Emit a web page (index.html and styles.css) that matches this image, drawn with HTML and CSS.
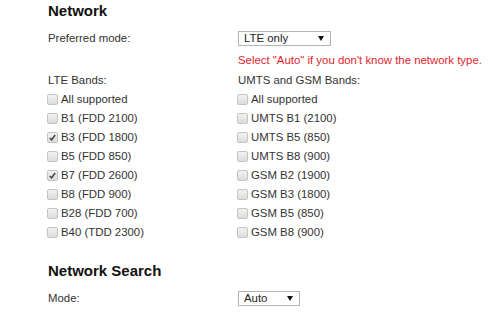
FILE: index.html
```html
<!DOCTYPE html>
<html>
<head>
<meta charset="utf-8">
<link rel="stylesheet" href="styles.css">
</head>
<body>
<div class="page">
  <h2 class="title">Network</h2>
  <div class="row first">
    <div class="label">Preferred mode:</div>
    <div><span class="select wide"><span>LTE only</span><svg class="arrow" width="6" height="5" viewBox="0 0 6 5"><path d="M0 0H6L3 5Z" fill="#111"/></svg></span></div>
  </div>
  <div class="row">
    <div></div>
    <div class="note">Select "Auto" if you don't know the network type.</div>
  </div>
  <div class="bands">
    <div class="col">
      <div class="line">LTE Bands:</div>
      <label class="line"><span class="cb"></span>All supported</label>
      <label class="line"><span class="cb"></span>B1 (FDD 2100)</label>
      <label class="line"><span class="cb"><svg width="9" height="9" viewBox="0 0 9 9"><path d="M1.8 5L3.6 6.8L7.2 2" fill="none" stroke="#444" stroke-width="1.5"/></svg></span>B3 (FDD 1800)</label>
      <label class="line"><span class="cb"></span>B5 (FDD 850)</label>
      <label class="line"><span class="cb"><svg width="9" height="9" viewBox="0 0 9 9"><path d="M1.8 5L3.6 6.8L7.2 2" fill="none" stroke="#444" stroke-width="1.5"/></svg></span>B7 (FDD 2600)</label>
      <label class="line"><span class="cb"></span>B8 (FDD 900)</label>
      <label class="line"><span class="cb"></span>B28 (FDD 700)</label>
      <label class="line"><span class="cb"></span>B40 (TDD 2300)</label>
    </div>
    <div class="col">
      <div class="line">UMTS and GSM Bands:</div>
      <label class="line"><span class="cb"></span>All supported</label>
      <label class="line"><span class="cb"></span>UMTS B1 (2100)</label>
      <label class="line"><span class="cb"></span>UMTS B5 (850)</label>
      <label class="line"><span class="cb"></span>UMTS B8 (900)</label>
      <label class="line"><span class="cb"></span>GSM B2 (1900)</label>
      <label class="line"><span class="cb"></span>GSM B3 (1800)</label>
      <label class="line"><span class="cb"></span>GSM B5 (850)</label>
      <label class="line"><span class="cb"></span>GSM B8 (900)</label>
    </div>
  </div>
  <h2 class="title second">Network Search</h2>
  <div class="row first">
    <div class="label">Mode:</div>
    <div><span class="select narrow"><span>Auto</span><svg class="arrow" width="6" height="5" viewBox="0 0 6 5"><path d="M0 0H6L3 5Z" fill="#111"/></svg></span></div>
  </div>
</div>
</body>
</html>
```
FILE: styles.css
```css
html, body {
  margin: 0;
  padding: 0;
  background: #fff;
}
body {
  font-family: "Liberation Sans", Arial, sans-serif;
  font-size: 11.4px;
  color: #333;
}
.page {
  padding: 2px 0 0 48px;
}
.title {
  margin: 0;
  font-size: 15px;
  line-height: 18px;
  font-weight: bold;
  color: #111;
}
.title.second {
  margin-top: 20px;
}
.row {
  display: grid;
  grid-template-columns: 190px auto;
  line-height: 16px;
}
.row.first {
  margin-top: 10px;
}
.label {
  line-height: 16px;
}
.note {
  margin-top: 6px;
  color: #e3242b;
  line-height: 16px;
}
.select {
  display: flex;
  align-items: center;
  justify-content: space-between;
  box-sizing: border-box;
  height: 15px;
  margin-top: 1px;
  padding: 0 6px 0 5px;
  border: 1px solid #b4b4b4;
  background: #fff;
  color: #222;
  line-height: 13px;
}
.select.wide { width: 93px; }
.select.narrow { width: 62px; }
.arrow { display: block; }
.bands {
  display: grid;
  grid-template-columns: 190px auto;
  margin-top: 2.5px;
}
.line {
  display: flex;
  align-items: center;
  height: 19px;
  line-height: 19px;
}
.cb {
  display: flex;
  align-items: center;
  justify-content: center;
  box-sizing: border-box;
  width: 11px;
  height: 11px;
  margin: 0 3px 0 -1px;
  border: 1px solid #c4c4c4;
  border-radius: 2px;
  background: linear-gradient(#f2f2f2, #dcdcdc);
}
.cb svg { display: block; }
```
